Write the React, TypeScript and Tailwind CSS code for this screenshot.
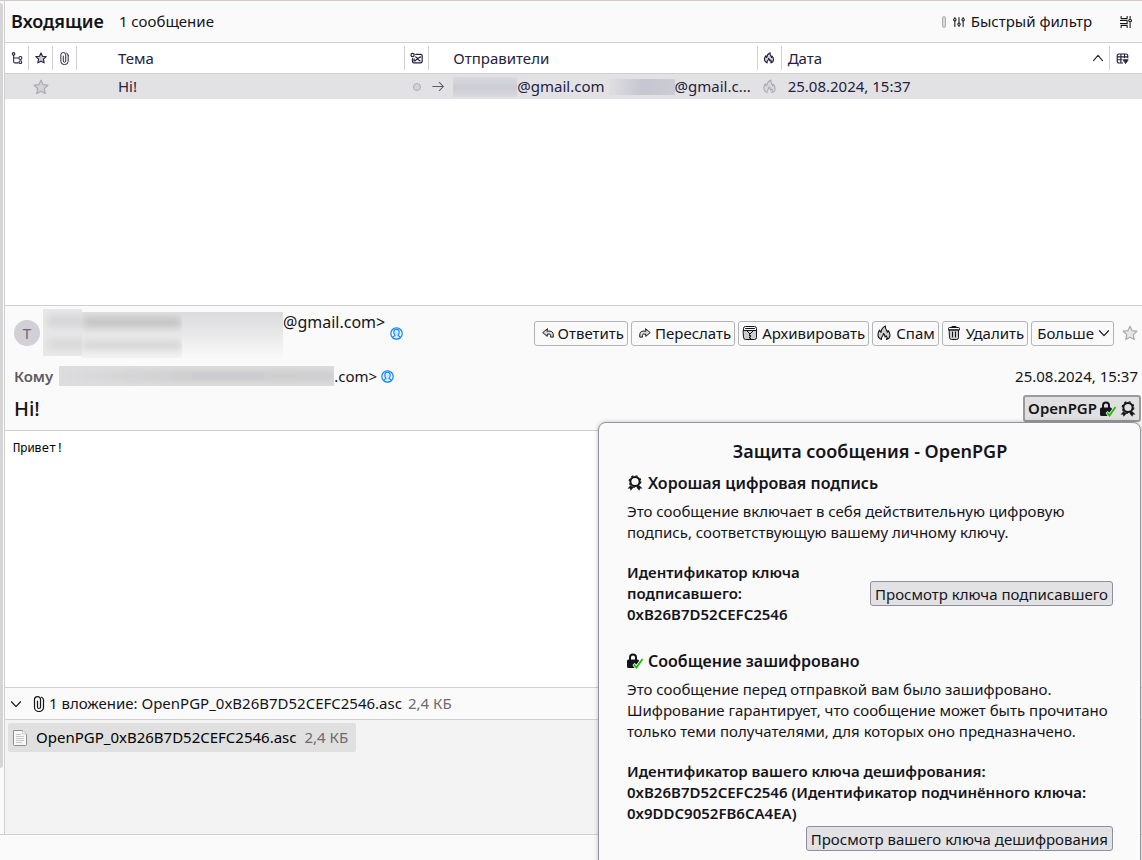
import type { ReactNode } from 'react';

type IconProps = { className?: string };

function Svg({ className = '', children, size = 16 }: { className?: string; children: ReactNode; size?: number }) {
  return (
    <svg
      aria-hidden="true"
      width={size}
      height={size}
      viewBox="0 0 16 16"
      fill="none"
      stroke="currentColor"
      strokeLinecap="round"
      strokeLinejoin="round"
      className={`shrink-0 ${className}`}
    >
      {children}
    </svg>
  );
}

const ThreadIcon = () => (
  <Svg size={12}>
    <path strokeWidth="1.4" d="M3.5 4v8.5a2 2 0 0 0 2 2h4M3.5 8h6" />
    <circle strokeWidth="1.4" cx="3.5" cy="2.5" r="1.7" />
    <circle strokeWidth="1.4" cx="12.5" cy="8" r="2" />
    <circle strokeWidth="1.4" cx="12.5" cy="13.5" r="1.8" />
  </Svg>
);

const StarIcon = ({ className, size = 16 }: IconProps & { size?: number }) => (
  <Svg size={size} className={className}>
    <path
      fill="currentColor"
      fillOpacity="0.25"
      strokeWidth={size < 14 ? 1.5 : 1.2}
      d="M8 1.2l2 4.4 4.9.6-3.6 3.4.9 4.9L8 12.2l-4.2 2.3.9-4.9L1.1 6.2 6 5.6z"
    />
  </Svg>
);

const ClipIcon = ({ className, size = 16 }: IconProps & { size?: number }) => (
  <Svg size={size} className={className}>
    <path
      strokeWidth="1.2"
      d="M12.5 4v7.500a4.500 4 0 0 1-9 0V3.500a3 2.900 0 0 1 6 0V11a1.500 1.500 0 0 1-3 0V5M10.500 1.200a3 3 0 0 1 2 2.800"
    />
  </Svg>
);

const ReadIcon = () => (
  <Svg size={13}>
    <path strokeWidth="1.5" d="M7 3h6a2 2 0 0 1 2 2v6.500a2 2 0 0 1-2 2H5a2 2 0 0 1-2-2V8M6 11l3-2.500L12.500 11M7 6l2.500 2L13 6M5 11V8.500" />
    <circle strokeWidth="1.5" cx="3.200" cy="3.800" r="2" />
  </Svg>
);

const FlameIcon = ({ className, size = 16 }: IconProps & { size?: number }) => (
  <Svg size={size} className={className}>
    <path
      fill="currentColor"
      fillOpacity="0.2"
      strokeWidth={size < 14 ? 1.5 : 1.1}
      d="M5.500 14.500C3 13.500 1.800 11.500 2 9.200c.1-1.700.8-3 1.600-4.200.3 1.200.7 1.800 1.400 2.300C5.200 4.500 6.500 2.300 9.500 1c-.5 2 .1 3 1 4.200.5.700.8 1.300.8 2.100.5-.4.7-1 .7-1.800 1.300 1.300 2 2.900 2 4.500 0 2.100-1.300 3.800-3.500 4.500.8-1.300.7-2.600-.3-3.600-.3.600-.7.900-1.200 1 .1-1.500-.4-2.600-1.500-3.400 0 1.500-.6 2.200-1.300 3-.9 1-1.200 2-.7 3z"
    />
  </Svg>
);

const SlidersIcon = () => (
  <Svg size={12}>
    <path strokeWidth="1.400" d="M2.500 7V14M2.500 2v.5M8 2v7M8 13.500v.5M13.500 7V14M13.500 2v.5" />
    <circle strokeWidth="1.400" cx="2.500" cy="5" r="1.600" />
    <circle strokeWidth="1.400" cx="8" cy="11" r="1.600" />
    <circle strokeWidth="1.400" cx="13.500" cy="5" r="1.600" />
  </Svg>
);

const DisplayIcon = () => (
  <Svg size={12}>
    <path strokeWidth="1.400" strokeLinecap="butt" d="M1.500 0v4M1.500 12v4M9.500 0v4M9.500 12v4M1 3.500h9M1 12.500h9M0 6h9.500v4H0M13.500 8.500V16M13.500 0v3.500" />
    <circle strokeWidth="1.400" cx="13.500" cy="6" r="1.800" />
  </Svg>
);

const ColumnsIcon = () => (
  <Svg size={13}>
    <path strokeWidth="1.400" d="M8 13.500H3.500a2 2 0 0 1-2-2v-7a2 2 0 0 1 2-2h9a2 2 0 0 1 2 2V7M1.500 6h13M6 2.500v11M10.500 2.500V7M1.500 9.500H7" />
    <path fill="currentColor" strokeWidth="1" d="M9 9.500h6L12 14z" />
  </Svg>
);

const ContactIcon = () => (
  <Svg size={13} className="text-[#0a84ff]">
    <circle strokeWidth="1.500" cx="8" cy="8" r="7" />
    <path fill="#d5e8fc" strokeWidth="1.400" d="M3.500 13c.5-2 1.500-2 2.500-2.300v-1C4.800 8.800 4.500 7.500 4.700 6a3.300 3.300 0 0 1 6.600 0c.2 1.500-.1 2.800-1.300 3.700v1c1 .3 2 .3 2.500 2.300" />
  </Svg>
);

const ReplyIcon = () => (
  <Svg size={12}>
    <path fill="currentColor" fillOpacity="0.15" strokeWidth="1.300" d="M7 2.500L1 7.500l6 5V9.500h2.500c1.300 0 2 .7 2 2v2H15V10.500c0-3-1.800-5-4.500-5H7z" />
  </Svg>
);

const ForwardIcon = () => (
  <Svg size={12}>
    <path fill="currentColor" fillOpacity="0.15" strokeWidth="1.300" d="M9 2.500l6 5-6 5V9.500H6.500c-1.300 0-2 .7-2 2v2H1V10.500c0-3 1.800-5 4.500-5H9z" />
  </Svg>
);

const ArchiveIcon = () => (
  <Svg>
    <path fill="currentColor" fillOpacity="0.2" d="M1.500 5.500h13v7a2 2 0 0 1-2 2h-9a2 2 0 0 1-2-2z" />
    <path d="M1.500 5.500v-2a2 2 0 0 1 2-2h9a2 2 0 0 1 2 2v2M3.500 3.500h9M4.500 5.500L8 9l3.500-3.500" />
    <path strokeDasharray="1 1.500" d="M7.500 9.500v4.500M8.500 10.500v4" />
  </Svg>
);

const TrashIcon = () => (
  <Svg>
    <path fill="currentColor" fillOpacity="0.2" d="M3.500 5h9v7.500a2 2 0 0 1-2 2h-5a2 2 0 0 1-2-2z" />
    <path d="M2.500 4.500v-1a1 1 0 0 1 1-1h9a1 1 0 0 1 1 1v1zM5.500 2l.5-.5h4l.5.5M6.500 7v5M9.500 7v5" />
  </Svg>
);

const LockIcon = () => (
  <svg aria-hidden="true" width="17" height="16" viewBox="0 0 17 16" fill="none" className="shrink-0">
    <path stroke="#15141a" strokeWidth="2" d="M3 8V4.500a3 3 0 0 1 6 0V8" />
    <path fill="#15141a" d="M0 8a1.500 1.500 0 0 1 1.500-1.500h9A1.500 1.500 0 0 1 12 8l-2.500 3.500-2-1.500-2 2 2 3h-6A1.500 1.500 0 0 1 0 13.500z" />
    <path stroke="#12bc00" strokeWidth="1.700" d="M7 11.500l2.500 3L15.500 6" />
  </svg>
);

const SealIcon = () => (
  <svg aria-hidden="true" width="16" height="16" viewBox="0 0 16 16" fill="none" className="shrink-0">
    <circle cx="8" cy="6.500" r="4.600" stroke="#15141a" strokeWidth="2" />
    <circle cx="8" cy="6.500" r="5.800" stroke="#15141a" strokeWidth="1.200" strokeDasharray="2.200 2.350" />
    <path fill="#15141a" d="M3.500 10.500L.5 13.500l2.500.1.600 2.200 2.900-3.300zM12.500 10.500l3 3-2.500.1-.6 2.200-2.900-3.300z" />
  </svg>
);

const Chevron = ({ up = false }: { up?: boolean }) => (
  <Svg size={12}>
    <path strokeWidth="1.500" d={up ? 'M2 11.500l6-7 6 7' : 'M2 5l6 6.500L14 5'} />
  </Svg>
);

const FileIcon = () => (
  <svg aria-hidden="true" width="16" height="18" viewBox="0 0 16 18" fill="#f7f7f7" className="shrink-0">
    <path stroke="#8f8f8f" strokeLinejoin="round" d="M1.500 1.500h9l4 3.500v10.500a1 1 0 0 1-1 1h-11a1 1 0 0 1-1-1z" />
    <path stroke="#c9c9c9" d="M10.500 1.500v3.500h4M4 5.500h5M4 7.500h8M4 9.500h8M4 11.500h8M4 13.500h6" />
  </svg>
);

function HeadCell({ children, label, separator = true, className = '' }: {
  children?: ReactNode;
  label?: string;
  separator?: boolean;
  className?: string;
}) {
  return (
    <th aria-label={label} className="p-0 font-normal">
      <div className={`flex h-6 items-center ${separator ? 'border-r border-[#d0d0d4]' : ''} ${className}`}>{children}</div>
    </th>
  );
}

function ToolButton({ icon, children }: { icon?: ReactNode; children: ReactNode }) {
  return (
    <button className="flex h-[25px] items-center gap-1 whitespace-nowrap rounded-[3px] border border-[#b4b4b8] px-[3px]">
      {icon}
      {children}
    </button>
  );
}

function KeyButton({ children }: { children: ReactNode }) {
  return (
    <button className="h-[25px] shrink-0 whitespace-nowrap rounded-[3px] border border-[#8f8f9d] bg-[#e2e2e4] px-1 leading-5">
      {children}
    </button>
  );
}

function SecurityPopup() {
  return (
    <section
      aria-label="Защита сообщения - OpenPGP"
      className="absolute top-full right-0 z-10 h-[480px] w-[543px] rounded-lg border border-[#94949c] bg-[#fafafa] pt-4 pr-[27px] pl-7 leading-[21px] shadow-[0_0_4px_rgba(0,0,0,0.25)]"
    >
      <h2 className="text-center text-[18px] leading-6 font-semibold">Защита сообщения - OpenPGP</h2>
      <h3 className="mt-2 flex items-center gap-[5px] text-[16px] leading-6 font-semibold">
        <SealIcon />
        Хорошая цифровая подпись
      </h3>
      <p className="mt-1.5">Это сообщение включает в себя действительную цифровую подпись, соответствующую вашему личному ключу.</p>
      <div className="mt-[19px] flex items-center justify-between gap-2">
        <p className="font-semibold">
          Идентификатор ключа подписавшего:
          <br />
          0xB26B7D52CEFC2546
        </p>
        <KeyButton>Просмотр ключа подписавшего</KeyButton>
      </div>
      <h3 className="mt-6 flex items-center gap-1 text-[16px] leading-6 font-semibold">
        <LockIcon />
        Сообщение зашифровано
      </h3>
      <p className="mt-1.5">
        Это сообщение перед отправкой вам было зашифровано. Шифрование гарантирует, что сообщение может быть прочитано
        только теми получателями, для которых оно предназначено.
      </p>
      <p className="mt-[19px] font-semibold">
        Идентификатор вашего ключа дешифрования:
        <br />
        0xB26B7D52CEFC2546 (Идентификатор подчинённого ключа: 0x9DDC9052FB6CA4EA)
      </p>
      <div className="mt-0.5 flex justify-end">
        <KeyButton>Просмотр вашего ключа дешифрования</KeyButton>
      </div>
    </section>
  );
}

function Smear({ className }: { className: string }) {
  return <span aria-hidden="true" className={`block shrink-0 ${className}`} />;
}

export default function App() {
  return (
    <div className="flex h-screen flex-col overflow-hidden border-t border-[#d4cbc9] bg-[#fafafa] font-['Noto_Sans',sans-serif] text-[15px] text-[#15141a]">
      <div className="flex min-h-0 flex-1">
        <div className="w-[5px] shrink-0 border-r border-[#d0d0d4] pt-0.5">
          <div className="h-[765px] w-[3px] rounded-r-sm bg-[#d5d5d5]" />
        </div>

        <main className="flex min-w-0 flex-1 flex-col">
          <header className="flex h-[42px] shrink-0 items-center border-b border-[#d0d0d4] pr-[10px] pl-1.5">
            <h1 className="text-[18px] font-semibold">Входящие</h1>
            <span className="ml-[15px]">1 сообщение</span>
            <button className="ml-auto flex items-center">
              <span className="mr-[7px] h-3 w-1 rounded-xs border border-[#b0b0b3] bg-[#d9d9dc]" />
              <SlidersIcon />
              <span className="ml-1.5">Быстрый фильтр</span>
            </button>
            <button aria-label="Параметры отображения списка" className="ml-7">
              <DisplayIcon />
            </button>
          </header>

          <div className="h-[263px] shrink-0 border-b border-[#d0d0d4] bg-white text-[#25213f]">
            <table className="w-full table-fixed border-separate border-spacing-0 text-left">
              <colgroup>
                <col className="w-6" />
                <col className="w-6" />
                <col className="w-6" />
                <col />
                <col className="w-6" />
                <col />
                <col className="w-6" />
                <col />
                <col className="w-8" />
              </colgroup>
              <thead>
                <tr className="h-[31px] [&>th]:border-b [&>th]:border-[#d0d0d4]">
                  <HeadCell label="Обсуждение" className="justify-center"><ThreadIcon /></HeadCell>
                  <HeadCell label="Избранное" className="justify-center"><StarIcon size={12} /></HeadCell>
                  <HeadCell label="Вложения" className="justify-center"><ClipIcon size={13} /></HeadCell>
                  <HeadCell className="pl-[41px]">Тема</HeadCell>
                  <HeadCell label="Прочитано" className="justify-center"><ReadIcon /></HeadCell>
                  <HeadCell className="pl-6">Отправители</HeadCell>
                  <HeadCell label="Спам" className="justify-center"><FlameIcon size={12} /></HeadCell>
                  <HeadCell className="justify-between pr-[5px] pl-1.5">Дата<Chevron up /></HeadCell>
                  <HeadCell label="Выбор столбцов" separator={false} className="pl-1.5"><ColumnsIcon /></HeadCell>
                </tr>
              </thead>
              <tbody>
                <tr className="h-[25px] bg-[#e2e2e5]">
                  <td className="p-0" />
                  <td className="p-0"><div className="flex justify-center pr-px text-[#a9a9b1]"><StarIcon /></div></td>
                  <td className="p-0" />
                  <td className="py-0 pr-0 pl-[41px]">Hi!</td>
                  <td className="p-0">
                    <div className="mx-auto size-2 rounded-full border border-[#adadb4] bg-[#d3d3d8]" />
                  </td>
                  <td className="p-0">
                    <div className="flex items-center whitespace-nowrap">
                      <Svg size={13} className="ml-[3px] text-[#5c5972]"><path strokeWidth="1.300" d="M1 8h13M9 3l5 5-5 5" /></Svg>
                      <Smear className="ml-2 h-5 w-16 bg-linear-to-b from-[#d9d9de] via-[#ccccd4] to-[#d9d9de]" />
                      @gmail.com
                      <Smear className="ml-1 h-4 w-[66px] bg-linear-to-r from-[#dfdfe3] via-[#c6c6d0] to-[#ccccd4]" />
                      @gmail.c...
                    </div>
                  </td>
                  <td className="p-0"><div className="flex justify-center text-[#a9a9b1]"><FlameIcon size={15} /></div></td>
                  <td className="py-0 pr-0 pl-1.5">25.08.2024, 15:37</td>
                  <td className="p-0" />
                </tr>
              </tbody>
            </table>
          </div>

          <div className="h-[125px] shrink-0 border-b border-[#d0d0d4] pl-[9px]">
            <div className="flex h-[54px] items-center pr-1">
              <span className="flex size-[26px] shrink-0 items-center justify-center rounded-full bg-[#d0d0d6] text-[#6a6a70]">T</span>
              <div className="ml-[3px] flex h-12 text-[16px] leading-[27px]">
                <div aria-hidden="true" className="flex w-[240px] items-start">
                  <div className="flex h-[47px] w-[39px] flex-col gap-3 overflow-hidden bg-[#e9e9ea] pt-1.5">
                    <Smear className="ml-1 h-3 w-12 bg-[#d3d4d6] blur-xs" />
                    <Smear className="ml-1 h-2.5 w-12 bg-[#d6d6d7] blur-xs" />
                  </div>
                  <div className="mt-[3px] flex h-[46px] w-[100px] flex-col gap-3 overflow-hidden bg-linear-to-b from-[#e3e3e4] to-[#f4f4f4] pt-1">
                    <Smear className="h-3 w-full bg-[#c3c3c4] blur-xs" />
                    <Smear className="h-2.5 w-full bg-[#d3d3d4] blur-xs" />
                  </div>
                  <div className="mt-[3px] h-[45px] w-[101px] bg-linear-to-b from-[#dbdbdd] via-[#e9e9ea] to-[#f9f9f9]" />
                </div>
                @gmail.com&gt;
              </div>
              <span className="ml-[5px]"><ContactIcon /></span>
              <div className="ml-auto flex gap-[3px]">
                <ToolButton icon={<span className="pl-1"><ReplyIcon /></span>}>Ответить</ToolButton>
                <ToolButton icon={<span className="pl-1"><ForwardIcon /></span>}>Переслать</ToolButton>
                <ToolButton icon={<ArchiveIcon />}>Архивировать</ToolButton>
                <ToolButton icon={<FlameIcon />}>Спам</ToolButton>
                <ToolButton icon={<TrashIcon />}>Удалить</ToolButton>
                <ToolButton><span className="pl-0.5">Больше</span><Chevron /></ToolButton>
              </div>
              <button aria-label="В избранное" className="ml-2 text-[#aaaaae]"><StarIcon /></button>
            </div>
            <div className="flex h-8 items-center pr-1">
              <span className="font-semibold text-[#5b5b62]">Кому</span>
              <span aria-hidden="true" className="ml-1.5 flex h-5 w-[275px] shrink-0 items-center overflow-hidden bg-[#dededf]">
                <Smear className="h-2.5 w-full bg-linear-to-r from-[#dcdcde] via-[#c8c8ca] to-[#c9c9cb] blur-xs" />
              </span>
              .com&gt;
              <span className="ml-1"><ContactIcon /></span>
              <time className="ml-auto">25.08.2024, 15:37</time>
            </div>
            <div className="flex h-[33px] items-center justify-between pr-px">
              <h2 className="text-[20px] font-medium">Hi!</h2>
              <div className="relative">
                <button className="flex h-[27px] items-center gap-[3px] rounded-[3px] border-2 border-[#9a9a9e] bg-[#e0e0e0] px-[3px] font-semibold">
                  OpenPGP
                  <LockIcon />
                  <SealIcon />
                </button>
                <SecurityPopup />
              </div>
            </div>
          </div>

          <article className="h-[257px] shrink-0 border-b border-[#d0d0d4] bg-white px-2 pt-2 text-black">
            <pre className="font-['Noto_Sans_Mono','DejaVu_Sans_Mono',monospace] text-[12px] leading-[17px]">Привет!</pre>
          </article>

          <button className="flex h-8 shrink-0 items-center border-b border-[#d0d0d4] pl-[5px]">
            <Chevron />
            <ClipIcon className="ml-[9px]" />
            <span className="ml-0.5">1 вложение: OpenPGP_0xB26B7D52CEFC2546.asc</span>
            <span className="ml-1.5 text-[#6b6b70]">2,4 КБ</span>
          </button>

          <div className="min-h-0 flex-1 bg-[#f3f3f3] pt-[3px] pl-[3px]">
            <button className="flex h-[29px] items-center rounded-xs bg-[#e0e0e0] pr-2 pl-1 text-black">
              <FileIcon />
              <span className="ml-2">OpenPGP_0xB26B7D52CEFC2546.asc</span>
              <span className="ml-2 text-[#6b6b70]">2,4 КБ</span>
            </button>
          </div>
        </main>
      </div>
      <footer className="h-[26px] shrink-0 border-t border-[#d0d0d4]" />
    </div>
  );
}
